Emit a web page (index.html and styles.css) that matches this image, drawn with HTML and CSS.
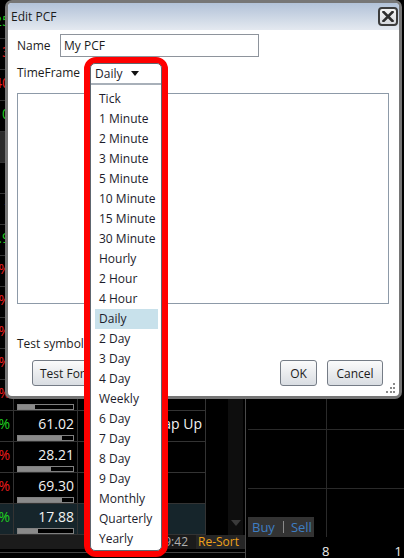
FILE: index.html
```html
<!DOCTYPE html>
<html>
<head>
<meta charset="utf-8">
<title>Edit PCF</title>
<link rel="stylesheet" href="styles.css">
</head>
<body>
<div class="app">
  <div class="left">
    <div class="tablewrap">
      <div class="table">
        <div class="row"><div class="c1 green">0.25</div><div class="c2"></div><div class="c3"></div></div>
        <div class="row"><div class="c1 red">2.13</div><div class="c2"></div><div class="c3"></div></div>
        <div class="row"><div class="c1 red">1.40</div><div class="c2"></div><div class="c3"></div></div>
        <div class="row"><div class="c1 green">3.10</div><div class="c2"></div><div class="c3"></div></div>
        <div class="row head"><div class="c1"></div><div class="c2"></div><div class="c3"></div></div>
        <div class="row"><div class="c1 white">(</div><div class="c2"></div><div class="c3"></div></div>
        <div class="row"><div class="c1 white">t</div><div class="c2"></div><div class="c3"></div></div>
        <div class="row"><div class="c1 green">2.9</div><div class="c2"></div><div class="c3"></div></div>
        <div class="row"><div class="c1 red">-1.2%</div><div class="c2"></div><div class="c3"></div></div>
        <div class="row"><div class="c1 red">-0.8%</div><div class="c2"></div><div class="c3"></div></div>
        <div class="row"><div class="c1 red">-2.4%</div><div class="c2"></div><div class="c3"></div></div>
        <div class="row"><div class="c1 red">-1.9%</div><div class="c2"></div><div class="c3"></div></div>
        <div class="row"><div class="c1 red">-0.5%</div><div class="c2"><span class="num">44.10</span><span class="bar"><span class="fill" style="width:30%"></span></span></div><div class="c3"></div></div>
        <div class="row"><div class="c1 green">1.2%</div><div class="c2"><span class="num">61.02</span><span class="bar"><span class="fill" style="width:80%"></span></span></div><div class="c3"><span class="tag">Gap Up</span></div></div>
        <div class="row"><div class="c1 red">-3.1%</div><div class="c2"><span class="num">28.21</span><span class="bar"><span class="fill" style="width:60%"></span></span></div><div class="c3"></div></div>
        <div class="row"><div class="c1 red">-0.7%</div><div class="c2"><span class="num">69.30</span><span class="bar"><span class="fill" style="width:80%"></span></span></div><div class="c3"></div></div>
        <div class="row sel"><div class="c1 green">2.4%</div><div class="c2"><span class="num">17.88</span><span class="bar"><span class="fill" style="width:37%"></span></span></div><div class="c3"></div></div>
      </div>
      <div class="scroll"><svg class="sarrow" width="10" height="6" viewBox="0 0 10 6"><path d="M0 0H10L5 6Z" fill="#3a3a3a"/></svg></div>
    </div>
    <div class="status"><span class="time">09:42</span><span class="resort">Re-Sort</span></div>
    <div class="foot"></div>
  </div>
  <div class="chart">
    <div class="plot"><div class="buysell"><span class="buy">Buy</span><span class="sep"></span><span class="buy">Sell</span></div></div>
    <div class="axis"><span class="t8">8</span><span class="t1">1</span></div>
  </div>
</div>

<div class="dialog">
  <div class="titlebar">
    <span class="title">Edit PCF</span>
    <span class="close"><svg width="12" height="11" viewBox="0 0 12 11"><path d="M1.5 1L10.5 10M10.5 1L1.5 10" stroke="#2e2e2e" stroke-width="2.6" stroke-linecap="square"/></svg></span>
  </div>
  <div class="content">
    <div class="field">
      <span class="label">Name</span>
      <span class="input">My PCF</span>
    </div>
    <div class="field tf">
      <span class="label">TimeFrame</span>
      <span class="select">Daily</span>
    </div>
    <div class="textarea"></div>
    <div class="field ts"><span class="label">Test symbol</span></div>
    <div class="buttons">
      <span class="btn test">Test Formula</span>
      <span class="btn ok">OK</span>
      <span class="btn cancel">Cancel</span>
    </div>
  </div>
  <svg class="grip" width="10" height="10" viewBox="0 0 10 10">
    <rect x="7" y="0" width="2" height="2" fill="#8a8a8a"/>
    <rect x="4" y="4" width="2" height="2" fill="#8a8a8a"/>
    <rect x="7" y="4" width="2" height="2" fill="#8a8a8a"/>
    <rect x="0" y="8" width="2" height="2" fill="#8a8a8a"/>
    <rect x="4" y="8" width="2" height="2" fill="#8a8a8a"/>
    <rect x="7" y="8" width="2" height="2" fill="#8a8a8a"/>
  </svg>
</div>

<div class="highlight">
  <div class="dd">
    <div class="ddhead"><span>Daily</span><svg width="8" height="5" viewBox="0 0 8 5"><path d="M0 0H8L4 5Z" fill="#111"/></svg></div>
    <ul class="list">
      <li>Tick</li>
      <li>1 Minute</li>
      <li>2 Minute</li>
      <li>3 Minute</li>
      <li>5 Minute</li>
      <li>10 Minute</li>
      <li>15 Minute</li>
      <li>30 Minute</li>
      <li>Hourly</li>
      <li>2 Hour</li>
      <li>4 Hour</li>
      <li class="on">Daily</li>
      <li>2 Day</li>
      <li>3 Day</li>
      <li>4 Day</li>
      <li>Weekly</li>
      <li>6 Day</li>
      <li>7 Day</li>
      <li>8 Day</li>
      <li>9 Day</li>
      <li>Monthly</li>
      <li>Quarterly</li>
      <li>Yearly</li>
    </ul>
  </div>
</div>
</body>
</html>
```

FILE: styles.css
```css
* { box-sizing: border-box; }
html, body { margin: 0; padding: 0; }
body {
  width: 404px;
  height: 558px;
  overflow: hidden;
  background: #000;
  font-family: "Open Sans", "Noto Sans", sans-serif;
  position: relative;
}

/* background trading app */
.app { display: flex; width: 404px; height: 558px; }
.left { width: 246px; display: flex; flex-direction: column; border-right: 1px solid #4a4a4a; }
.tablewrap { height: 535px; display: flex; }
.table { width: 206px; padding-top: 8px; border-right: 1px solid #333; }
.row { height: 31px; display: flex; border-bottom: 1px solid #333; }
.row.head { background: #2a2a2a; }
.row.sel { background: #16252b; }
.c1 {
  width: 14px; border-right: 1px solid #333;
  display: flex; justify-content: flex-end; overflow: hidden;
  font-size: 14px; line-height: 18px; padding: 4px 3px 0 0; white-space: nowrap;
}
.green { color: #1fd21f; }
.red { color: #ee1c1c; }
.white { color: #ddd; }
.c2 {
  width: 64px; border-right: 1px solid #333;
  display: flex; flex-direction: column; padding-top: 4px;
}
.num { color: #f2f2f2; font-size: 14px; line-height: 18px; text-align: right; padding-right: 3px; }
.bar { display: block; margin: 2px 0 0 3px; width: 57px; height: 6px; border: 1px solid #808080; background: #000; }
.fill { display: block; height: 100%; background: #8a8a8a; }
.c3 { flex: 1; display: flex; justify-content: flex-end; padding: 4px 3px 0 0; }
.tag { color: #f2f2f2; font-size: 14px; line-height: 18px; }
.scroll {
  width: 15px; margin-left: 22px; background: #0e0e0e;
  display: flex; align-items: flex-end; justify-content: center; padding-bottom: 9px;
}
.status {
  height: 14px; background: #1b1b1b; display: flex; align-items: center; justify-content: flex-end;
  font-size: 12px; line-height: 14px;
}
.time { color: #b0b0b0; margin-right: 8px; }
.resort { color: #f0a21a; background: #262626; padding: 0 6px 0 2px; height: 14px; }
.foot { flex: 1; border-top: 3px solid #000; }
.foot::before { content: ""; display: block; height: 1px; background: #444; }

.chart { flex: 1; display: flex; flex-direction: column; }
.plot {
  height: 545px;
  display: flex; flex-direction: column; justify-content: flex-end; padding: 0 0 8px 2px;
  background:
    linear-gradient(#2a2a2a, #2a2a2a) 80px 0 / 1px 537px no-repeat,
    linear-gradient(#2a2a2a, #2a2a2a) 2px 429px / 100% 1px no-repeat,
    linear-gradient(#2a2a2a, #2a2a2a) 2px 488px / 100% 1px no-repeat;
}
.buysell {
  width: 66px; height: 20px; background: #333; display: flex; align-items: center;
  padding-left: 4px; font-size: 13px;
}
.buy { color: #3e7ec4; }
.sep { width: 1px; height: 12px; background: #8a8a8a; margin: 0 7px 0 8px; }
.axis { flex: 1; display: flex; font-size: 13px; color: #eee; line-height: 13px; }
.t8 { margin-left: 76px; }
.t1 { margin-left: 65px; }

/* dialog */
.dialog {
  position: absolute; left: 5px; top: 0; width: 397px; height: 399px;
  border: 3px solid #767676; border-radius: 7px; background: #fff;
  display: flex; flex-direction: column; color: #1b1b1b;
}
.titlebar {
  height: 27px; display: flex; align-items: center; padding: 0 1px 0 3px;
  background: linear-gradient(#b2c2d8, #e4e9f0);
  border-radius: 4px 4px 0 0;
}
.title { font-size: 12px; }
.close {
  margin-left: auto; width: 20px; height: 19px; border: 2px solid #3c3c3c; border-radius: 4px;
  background: linear-gradient(#f4f4f4, #d6d9de);
  display: flex; align-items: center; justify-content: center;
}
.content { flex: 1; padding: 4px 10px 0 9px; display: flex; flex-direction: column; font-size: 12px; }
.field { display: flex; align-items: center; }
.label { width: 43px; line-height: 16px; }
.input {
  width: 199px; height: 23px; border: 1px solid #8e949c; padding-left: 3px;
  line-height: 21px;
}
.tf { height: 20px; margin-top: 6px; }
.tf .label { width: 78px; }
.select { line-height: 20px; }
.textarea { margin-top: 10px; height: 211px; width: 372px; border: 1px solid #8d9aa8; }
.ts { height: 20px; margin-top: 30px; }
.ts .label { width: auto; }
.buttons { display: flex; margin-top: 6px; }
.btn {
  height: 26px; border: 1px solid #757c86; border-radius: 3px;
  background: linear-gradient(#fbfbfb, #d9dde2);
  display: flex; align-items: center; justify-content: center; font-size: 12px;
}
.test { margin-left: 15px; width: 104px; justify-content: flex-start; padding-left: 7px; }
.ok { margin-left: auto; width: 37px; }
.cancel { margin-left: 10px; margin-right: 6px; width: 56px; }
.grip { position: absolute; right: 3px; bottom: 3px; }

/* highlighted dropdown */
.highlight {
  position: absolute; left: 84px; top: 57px; width: 84px; height: 500px;
  border: 6px solid #ff0000; border-radius: 12px; background: #fff;
}
.dd {
  height: 100%; border: 1px solid #5e666f; border-radius: 5px;
  display: flex; flex-direction: column; font-size: 12px; color: #1c1c2c;
}
.ddhead { height: 19px; display: flex; align-items: center; padding-left: 4px; }
.ddhead svg { margin-left: 9px; }
.list {
  list-style: none; margin: 0; padding: 4px 0 1px; border-top: 2px solid #a8b0b9;
}
.list li { height: 20px; line-height: 20px; padding-left: 4px; margin: 0 3px 0 4px; }
.list li.on { background: #c8e1eb; }
```
